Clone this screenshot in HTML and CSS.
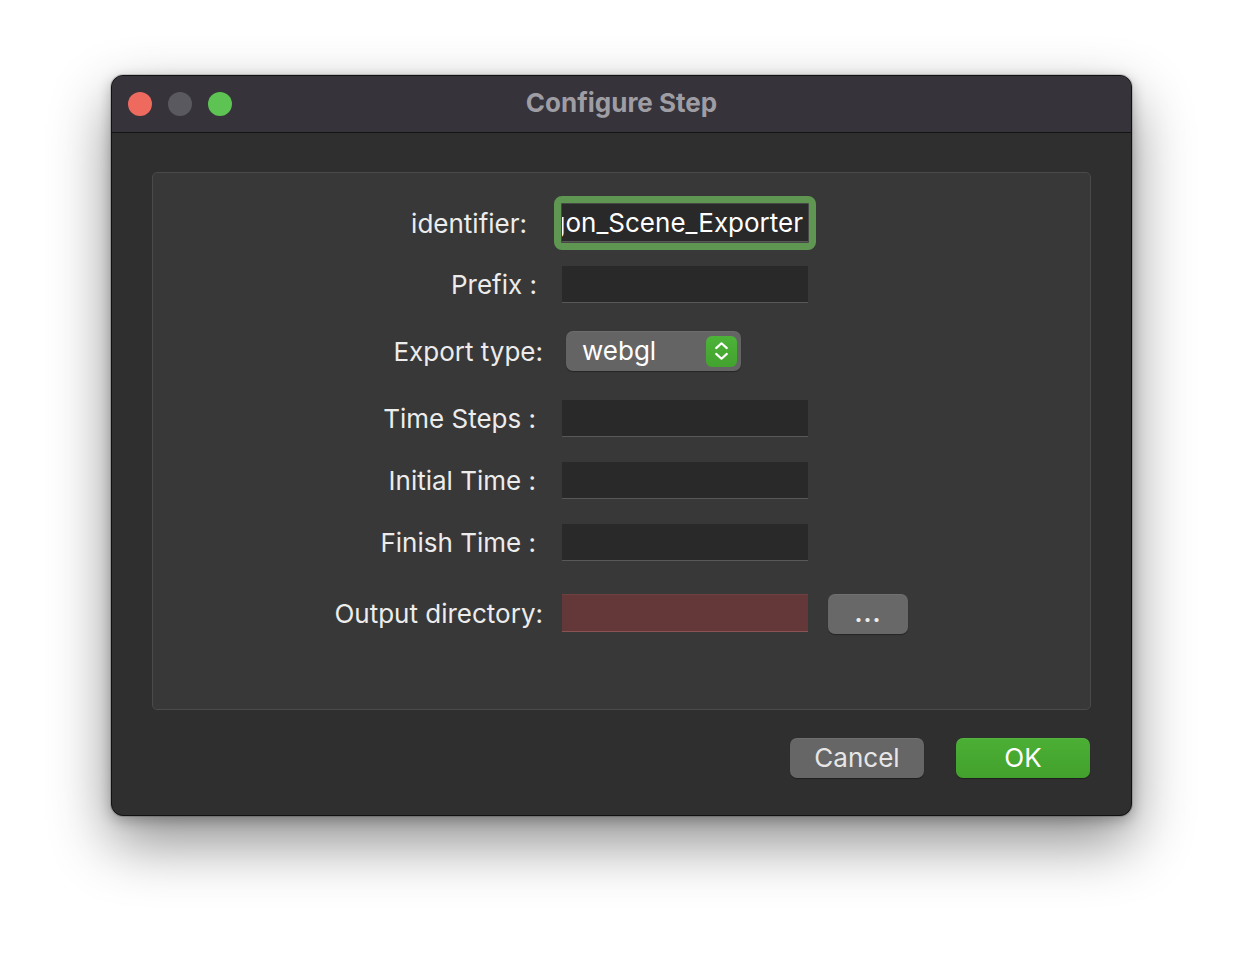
FILE: index.html
```html
<!DOCTYPE html>
<html>
<head>
<meta charset="utf-8">
<link rel="stylesheet" href="styles.css">
</head>
<body>
<div class="window">
  <div class="titlebar">
    <div class="lights">
      <span class="light red"></span>
      <span class="light gray"></span>
      <span class="light green"></span>
    </div>
    <div class="title">Configure Step</div>
  </div>
  <div class="content">
    <div class="group">
      <div class="row r-ident">
        <div class="label pad-16">identifier:</div>
        <div class="ring">
          <div class="field ident"><span class="val">Polygon_Scene_Exporter</span></div>
        </div>
      </div>
      <div class="row r-prefix">
        <div class="label pad-6">Prefix :</div>
        <div class="field"></div>
      </div>
      <div class="row r-export">
        <div class="label">Export type:</div>
        <div class="combo">
          <span class="combo-text">webgl</span>
          <span class="stepper">
            <svg width="32" height="32" viewBox="0 0 32 32">
              <path d="M10.5 13 L16 8 L21.5 13" fill="none" stroke="#ffffff" stroke-width="2.2" stroke-linecap="round" stroke-linejoin="round"/>
              <path d="M10.5 19 L16 24 L21.5 19" fill="none" stroke="#ffffff" stroke-width="2.2" stroke-linecap="round" stroke-linejoin="round"/>
            </svg>
          </span>
        </div>
      </div>
      <div class="row r-time">
        <div class="label pad-7">Time Steps :</div>
        <div class="field"></div>
      </div>
      <div class="row r-initial">
        <div class="label pad-7">Initial Time :</div>
        <div class="field"></div>
      </div>
      <div class="row r-finish">
        <div class="label pad-7">Finish Time :</div>
        <div class="field"></div>
      </div>
      <div class="row r-output">
        <div class="label">Output directory:</div>
        <div class="field error"></div>
        <button class="btn browse">...</button>
      </div>
    </div>
    <div class="buttons">
      <button class="btn push">Cancel</button>
      <button class="btn push ok">OK</button>
    </div>
  </div>
</div>
</body>
</html>
```
FILE: styles.css
```css
html, body {
  margin: 0;
  padding: 0;
  background: #ffffff;
}
body {
  width: 1244px;
  height: 964px;
  overflow: hidden;
  font-family: "Inter", "Liberation Sans", sans-serif;
}
.window {
  margin: 75px 0 0 111px;
  width: 1021px;
  height: 741px;
  box-sizing: border-box;
  border-radius: 12px;
  background: #2f2f2f;
  border: 1px solid #111111;
  box-shadow: 0 0 0 1px rgba(0,0,0,0.15), 0 26px 60px rgba(0,0,0,0.45), 0 4px 14px rgba(0,0,0,0.25);
  overflow: hidden;
}
.titlebar {
  height: 56px;
  background: #36333a;
  border-bottom: 1px solid #141414;
  display: flex;
  align-items: center;
  position: relative;
}
.lights {
  display: flex;
  gap: 16px;
  padding-left: 16px;
}
.light {
  width: 24px;
  height: 24px;
  border-radius: 50%;
  display: block;
}
.red { background: #ee6a5f; }
.gray { background: #5b5960; }
.green { background: #5dc453; }
.title {
  position: absolute;
  left: 0;
  right: 0;
  top: 0;
  line-height: 54px;
  text-align: center;
  font-weight: 700;
  font-size: 26px;
  color: #9f9da4;
}
.content {
  padding: 39px 40px 0 40px;
}
.group {
  height: 538px;
  box-sizing: border-box;
  border: 1px solid #4a4a4a;
  border-radius: 5px;
  background: #383838;
  padding-top: 23px;
  display: flex;
  flex-direction: column;
}
.row {
  display: flex;
  align-items: center;
}
.label {
  width: 390px;
  box-sizing: border-box;
  text-align: right;
  font-size: 26px;
  color: #ececec;
  margin-right: 19px;
  white-space: nowrap;
}
.pad-16 { padding-right: 16px; }
.pad-6 { padding-right: 6px; }
.pad-7 { padding-right: 7px; }
.field {
  width: 246px;
  height: 37px;
  box-sizing: border-box;
  background: #292929;
  border-bottom: 1px solid #585858;
}
.error {
  height: 38px;
  background: #643838;
  border-bottom: 1px solid #8a5252;
  border-top: 1px solid #6e4040;
}
.ring {
  margin-left: -8px;
  border: 7px solid #5f9651;
  border-radius: 8px;
  background: #474747;
  padding: 1px;
}
.ring .field {
  height: 38px;
  margin: 0;
  display: flex;
  justify-content: flex-end;
  align-items: center;
  overflow: hidden;
  border-bottom: 1px solid #585858;
}
.val {
  white-space: nowrap;
  font-size: 26px;
  color: #ffffff;
  padding-right: 5px;
  margin-top: -1px;
}
.r-ident { height: 54px; }
.r-prefix { margin-top: 16px; height: 37px; }
.r-export { margin-top: 28px; height: 40px; }
.r-time { margin-top: 29px; height: 37px; }
.r-initial { margin-top: 25px; height: 37px; }
.r-finish { margin-top: 25px; height: 37px; }
.r-output { margin-top: 32px; height: 40px; }
.combo {
  margin-left: 4px;
  width: 175px;
  height: 40px;
  box-sizing: border-box;
  border-radius: 7px;
  background: #646464;
  box-shadow: inset 0 1px 0 rgba(255,255,255,0.06), 0 1px 1px rgba(0,0,0,0.35);
  display: flex;
  align-items: center;
  justify-content: space-between;
  padding: 0 4px 0 16px;
}
.combo-text {
  font-size: 26px;
  color: #ffffff;
  margin-top: -2px;
}
.stepper {
  width: 31px;
  height: 31px;
  border-radius: 6px;
  background: linear-gradient(#4cb338, #43a22f);
  display: flex;
  align-items: center;
  justify-content: center;
}
.stepper svg { display: block; }
.btn {
  font-family: inherit;
  border: none;
  margin: 0;
  padding: 0;
  cursor: default;
}
.browse {
  margin-left: 20px;
  width: 80px;
  height: 40px;
  margin-top: 2px;
  border-radius: 7px;
  background: #686868;
  color: #ececec;
  font-size: 24px;
  line-height: 34px;
  font-weight: 700;
  letter-spacing: 1px;
  box-shadow: inset 0 1px 0 rgba(255,255,255,0.06), 0 1px 1px rgba(0,0,0,0.35);
}
.buttons {
  display: flex;
  justify-content: flex-end;
  gap: 32px;
  margin-top: 28px;
  padding-right: 1px;
}
.push {
  width: 134px;
  height: 40px;
  border-radius: 7px;
  background: #666666;
  color: #e6e6e6;
  font-size: 26px;
  line-height: 36px;
  box-shadow: inset 0 1px 0 rgba(255,255,255,0.06), 0 1px 1px rgba(0,0,0,0.35);
}
.ok {
  background: linear-gradient(#4caf35, #42a12c);
  color: #ffffff;
}
```
